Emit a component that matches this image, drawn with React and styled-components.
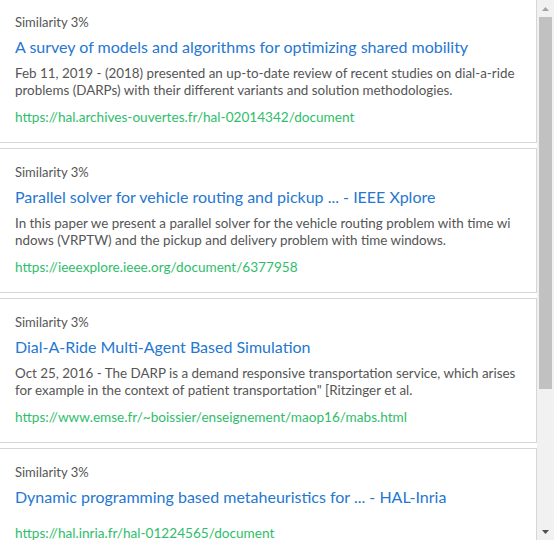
import styled, { createGlobalStyle } from "styled-components";

const GlobalStyle = createGlobalStyle`
  html, body {
    margin: 0;
    padding: 0;
    background: #fff;
  }
  body {
    font-family: Lato, "Open Sans", sans-serif;
  }
`

const results = [
  {
    similarity: 3,
    title: "A survey of models and algorithms for optimizing shared mobility",
    lines: [
      "Feb 11, 2019 - (2018) presented an up-to-date review of recent studies on dial-a-ride",
      "problems (DARPs) with their different variants and solution methodologies.",
    ],
    url: "https://hal.archives-ouvertes.fr/hal-02014342/document",
  },
  {
    similarity: 3,
    title: "Parallel solver for vehicle routing and pickup ... - IEEE Xplore",
    lines: [
      "In this paper we present a parallel solver for the vehicle routing problem with time wi",
      "ndows (VRPTW) and the pickup and delivery problem with time windows.",
    ],
    url: "https://ieeexplore.ieee.org/document/6377958",
  },
  {
    similarity: 3,
    title: "Dial-A-Ride Multi-Agent Based Simulation",
    lines: [
      "Oct 25, 2016 - The DARP is a demand responsive transportation service, which arises",
      "for example in the context of patient transportation\" [Ritzinger et al.",
    ],
    url: "https://www.emse.fr/~boissier/enseignement/maop16/mabs.html",
  },
  {
    similarity: 3,
    title: "Dynamic programming based metaheuristics for ... - HAL-Inria",
    lines: [],
    url: "https://hal.inria.fr/hal-01224565/document",
  },
];

const Frame = styled.div`
  display: flex;
  height: 540px;
  width: 554px;
`

const Viewport = styled.div`
  flex: 1;
  min-width: 0;
  overflow: hidden;
`

const ScrollBar = styled.div`
  width: 17px;
  flex: none;
  display: flex;
  flex-direction: column;
  background: #f1f1f1;
`

const ArrowButton = styled.div`
  height: 17px;
  flex: none;
  display: flex;
  align-items: center;
  justify-content: center;
`

const Track = styled.div`
  flex: 1;
  padding: 0 2px;
`

const Thumb = styled.div`
  height: 372px;
  background: #c1c1c1;
`

const List = styled.ul`
  list-style: none;
  margin: -2px 0 0 -1px;
  padding: 0;
  display: flex;
  flex-direction: column;
  gap: 5px;
`

const Card = styled.li`
  display: flex;
  flex-direction: column;
  border: 1px solid #d6d6d6;
  padding: 14px 15px 16px 15px;
  background: #fff;
`

const Similarity = styled.div`
  font-size: 13px;
  line-height: 18px;
  color: #555;
`

const Title = styled.a`
  display: block;
  margin-top: 6px;
  font-size: 16px;
  line-height: 20px;
  color: #2577d1;
  text-decoration: none;
  white-space: nowrap;
`

const Desc = styled.p`
  margin: 8px 0 0;
  font-size: 13.4px;
  line-height: 17px;
  color: #555;
  white-space: nowrap;
`

const Url = styled.a`
  display: block;
  margin-top: 9px;
  font-size: 13.6px;
  line-height: 18px;
  color: #2fbd6b;
  text-decoration: none;
  white-space: nowrap;
`

const Arrow = ({ down, color }) => (
  <svg width="7" height="4" viewBox="0 0 7 4">
    <polygon points={down ? "0,0 7,0 3.5,4" : "3.5,0 7,4 0,4"} fill={color} />
  </svg>
);

export default function App() {
  return (
    <>
      <GlobalStyle />
      <Frame>
        <Viewport>
          <List>
            {results.map((r, i) => (
              <Card key={i}>
                <Similarity>Similarity {r.similarity}%</Similarity>
                <Title href="#">{r.title}</Title>
                <Desc>
                  {r.lines.map((line, j) => (
                    <span key={j}>
                      {line}
                      {j < r.lines.length - 1 && <br />}
                    </span>
                  ))}
                </Desc>
                <Url href="#">{r.url}</Url>
              </Card>
            ))}
          </List>
        </Viewport>
        <ScrollBar>
          <ArrowButton>
            <Arrow color="#a3a3a3" />
          </ArrowButton>
          <Track>
            <Thumb />
          </Track>
          <ArrowButton>
            <Arrow down color="#505050" />
          </ArrowButton>
        </ScrollBar>
      </Frame>
    </>
  );
}
